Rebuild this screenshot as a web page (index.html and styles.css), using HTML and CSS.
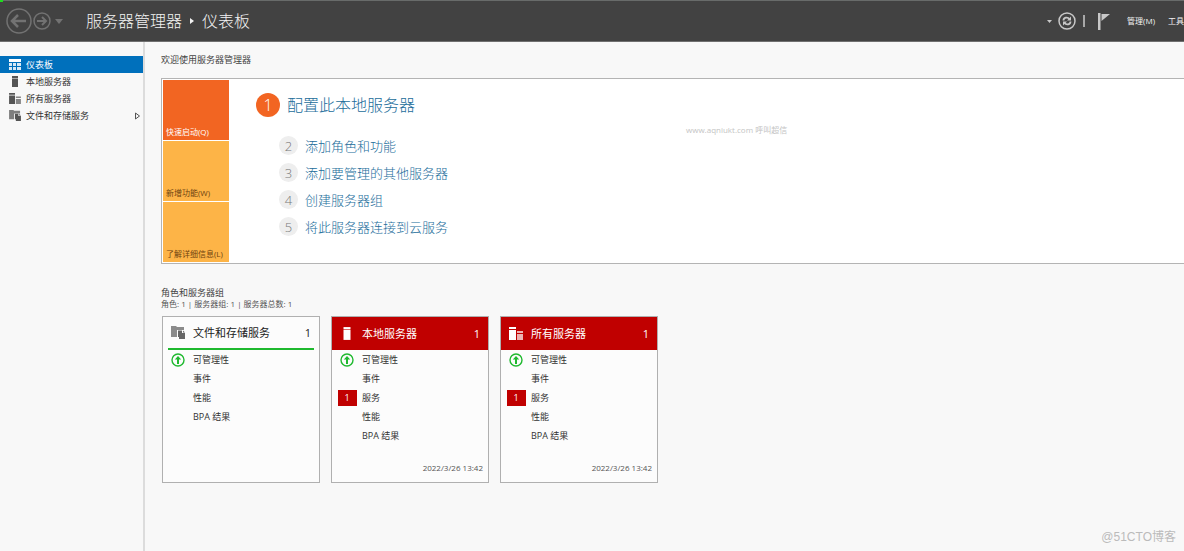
FILE: index.html
```html
<!DOCTYPE html>
<html lang="zh-CN">
<head>
<meta charset="utf-8">
<title>服务器管理器</title>
<link rel="stylesheet" href="styles.css">
</head>
<body>
<svg class="defs" aria-hidden="true">
  <symbol id="i-dash" viewBox="0 0 12 11"><path d="M0 0h12v3H0z"/><path opacity=".85" d="M0 4h3v3H0zM4 4h3v3H4zM8 4h4v3H8zM0 8h3v3H0zM4 8h3v3H4zM8 8h4v3H8z"/></symbol>
  <symbol id="i-server" viewBox="0 0 12 11"><path d="M3 0h6v2H3z"/><path d="M3 2.500h6V11H3z"/></symbol>
  <symbol id="i-servers" viewBox="0 0 14 13"><path d="M0 0h7v2H0zM0 3h7v10H0z"/><path opacity=".7" d="M8 4h6v2H8zM8 7h6v6H8z"/></symbol>
  <symbol id="i-files" viewBox="0 0 14 13"><path opacity=".75" d="M0 0h5l1 1h7v3H6v7H0zM0 2.500"/><path d="M7 4.500h4V7h3v6H8v-2H7zM12 4.500l2 2h-2z"/></symbol>
  <symbol id="i-up" viewBox="0 0 14 14"><circle cx="7" cy="7" r="6" fill="none" stroke="#1fb92f" stroke-width="1.4"/><path fill="#1fb92f" d="M7 3l3.200 3.400H8V11H6V6.400H3.800z"/></symbol>
</svg>

<header class="topbar">
  <nav class="history" aria-label="导航">
    <button class="icon-btn" aria-label="后退"><svg width="26" height="26" viewBox="0 0 26 26"><circle cx="13" cy="13" r="12"/><path d="M20 13H7M12 7l-6 6 6 6" stroke-width="2.500"/></svg></button>
    <button class="icon-btn" aria-label="前进"><svg width="18" height="18" viewBox="0 0 18 18"><circle cx="9" cy="9" r="8"/><path d="M4 9h9M9 5l4 4-4 4" stroke-width="2"/></svg></button>
    <button class="icon-btn" aria-label="历史记录"><svg width="8" height="5" viewBox="0 0 8 5"><path class="solid" d="M0 0h8L4 5z"/></svg></button>
  </nav>
  <h1 class="crumbs"><span>服务器管理器</span><svg width="4" height="6" viewBox="0 0 4 6"><path d="M0 0l4 3-4 3z"/></svg><span>仪表板</span></h1>
  <div class="tools">
    <button class="icon-btn" aria-label="选项"><svg width="5" height="3" viewBox="0 0 5 3"><path class="solid" d="M0 0h5L2.500 3z"/></svg></button>
    <button class="icon-btn" aria-label="刷新"><svg width="18" height="18" viewBox="0 0 18 18"><circle cx="9" cy="9" r="8"/><path d="M5.500 8.500c0-3 4-4 6-1.500M12.500 9.500c0 3-4 4-6 1.500" stroke-width="1.800"/><path class="solid" d="M13 4.500v4H9zM5 13.500v-4h4z"/></svg></button>
    <span class="divider"></span>
    <button class="icon-btn flag" aria-label="通知"><svg width="12" height="17" viewBox="0 0 12 17"><path class="solid" d="M0 0h2.500v17H0zM3.500 1H12L3.500 8z"/></svg></button>
    <button class="menu">管理(M)</button>
    <button class="menu">工具</button>
  </div>
</header>

<div class="body">
  <nav class="sidebar" aria-label="服务器">
    <a class="side-item active" href="#dashboard"><svg><use href="#i-dash"/></svg><span>仪表板</span></a>
    <a class="side-item" href="#local"><svg><use href="#i-server"/></svg><span>本地服务器</span></a>
    <a class="side-item" href="#all"><svg><use href="#i-servers"/></svg><span>所有服务器</span></a>
    <a class="side-item" href="#files"><svg><use href="#i-files"/></svg><span>文件和存储服务</span><svg class="expand" viewBox="0 0 5 8"><path d="M.5 1v6L4.500 4z"/></svg></a>
  </nav>

  <main class="content">
    <h2 class="section-title">欢迎使用服务器管理器</h2>
    <section class="welcome">
      <div class="tabs">
        <button class="tab selected">快速启动(Q)</button>
        <button class="tab">新增功能(W)</button>
        <button class="tab">了解详细信息(L)</button>
      </div>
      <div class="steps">
        <a class="step primary" href="#s1"><span class="num">1</span><span>配置此本地服务器</span></a>
        <a class="step" href="#s2"><span class="num">2</span><span>添加角色和功能</span></a>
        <a class="step" href="#s3"><span class="num">3</span><span>添加要管理的其他服务器</span></a>
        <a class="step" href="#s4"><span class="num">4</span><span>创建服务器组</span></a>
        <a class="step" href="#s5"><span class="num">5</span><span>将此服务器连接到云服务</span></a>
      </div>
      <p class="site-mark">www.aqniukt.com 呼叫超信</p>
    </section>

    <h2 class="section-title groups-title">角色和服务器组</h2>
    <p class="stats">角色: 1 | 服务器组: 1 | 服务器总数: 1</p>

    <div class="cards">
      <article class="card ok">
        <h3 class="card-head"><svg><use href="#i-files"/></svg><span>文件和存储服务</span><span class="count">1</span></h3>
        <ul class="rows">
          <li><span class="mark"><svg><use href="#i-up"/></svg></span><a href="#m">可管理性</a></li>
          <li><span class="mark"></span><a href="#e">事件</a></li>
          <li><span class="mark"></span><a href="#p">性能</a></li>
          <li><span class="mark"></span><a href="#b">BPA 结果</a></li>
        </ul>
      </article>
      <article class="card alert">
        <h3 class="card-head"><svg><use href="#i-server"/></svg><span>本地服务器</span><span class="count">1</span></h3>
        <ul class="rows">
          <li><span class="mark"><svg><use href="#i-up"/></svg></span><a href="#m">可管理性</a></li>
          <li><span class="mark"></span><a href="#e">事件</a></li>
          <li><span class="mark"><b class="badge">1</b></span><a href="#s">服务</a></li>
          <li><span class="mark"></span><a href="#p">性能</a></li>
          <li><span class="mark"></span><a href="#b">BPA 结果</a></li>
        </ul>
        <time class="stamp">2022/3/26 13:42</time>
      </article>
      <article class="card alert">
        <h3 class="card-head"><svg><use href="#i-servers"/></svg><span>所有服务器</span><span class="count">1</span></h3>
        <ul class="rows">
          <li><span class="mark"><svg><use href="#i-up"/></svg></span><a href="#m">可管理性</a></li>
          <li><span class="mark"></span><a href="#e">事件</a></li>
          <li><span class="mark"><b class="badge">1</b></span><a href="#s">服务</a></li>
          <li><span class="mark"></span><a href="#p">性能</a></li>
          <li><span class="mark"></span><a href="#b">BPA 结果</a></li>
        </ul>
        <time class="stamp">2022/3/26 13:42</time>
      </article>
    </div>
  </main>
</div>
<p class="credit">@51CTO博客</p>
</body>
</html>
```
FILE: styles.css
```css
* { box-sizing: border-box; margin: 0; padding: 0; }

body {
  display: flex;
  flex-direction: column;
  min-height: 100vh;
  background: #f8f8f8;
  color: #333;
  font: 9px/12px "Open Sans", "Noto Sans CJK SC", sans-serif;
}

a { color: inherit; text-decoration: none; }
button { border: 0; background: none; color: inherit; font: inherit; white-space: nowrap; }
.defs { position: absolute; width: 0; height: 0; }

/* Top bar */
.topbar {
  position: relative;
  display: flex;
  align-items: center;
  height: 42px;
  padding-left: 6px;
  border-top: 1px solid #686b6a;
  border-bottom: 1px solid #707070;
  background: #424242;
  color: #f2f2f2;
}
.topbar::before { content: ""; position: absolute; left: 0; top: -1px; width: 3px; height: 2px; background: #1fdc1f; }
.icon-btn { display: flex; }
.icon-btn svg { fill: none; stroke: currentColor; stroke-width: 1.5; }
.icon-btn .solid { fill: currentColor; stroke: none; }
.history { display: flex; align-items: center; gap: 1px; width: 80px; color: #727272; }
.history .icon-btn:last-child { margin-left: 3px; }
.crumbs { display: flex; align-items: center; gap: 8px; font-size: 16px; line-height: 24px; font-weight: 300; }
.crumbs svg { fill: currentColor; }
.tools { display: flex; align-items: center; margin-left: auto; color: #c8c8c8; }
.tools .icon-btn { margin-right: 6px; }
.divider { width: 2px; height: 12px; margin: 0 13px 0 1px; background: #a8a8a8; }
.tools .flag { margin-right: 17px; }
.menu { font-size: 8px; color: #f2f2f2; }
.menu + .menu { margin-left: 13px; }

/* Layout */
.body { display: flex; flex: 1; }
.sidebar { flex: none; width: 145px; padding-top: 14px; border-right: 2px solid #dcdcdc; }
.content { flex: 1; min-width: 0; padding: 12px 0 16px 16px; }

.side-item { display: flex; align-items: center; gap: 5px; height: 17px; padding: 0 3px 0 9px; }
.side-item svg { width: 12px; height: 11px; fill: #555; }
.side-item.active { background: #0070bc; color: #fff; }
.side-item.active svg { fill: #fff; }
.side-item .expand { width: 5px; height: 8px; margin-left: auto; fill: none; stroke: #555; stroke-width: 1; }

/* Welcome panel */
.section-title { font-size: 9px; line-height: 12px; font-weight: 400; color: #444; }
.welcome {
  position: relative;
  display: flex;
  margin-top: 12px;
  border: 1px solid #b4b4b4;
  border-right: 0;
  background: #fff;
}
.tabs { display: grid; grid-template-rows: repeat(3, 60px); gap: 1px; padding: 1px 0 1px 1px; width: 67px; }
.tab { display: flex; align-items: flex-end; padding: 0 0 2px 3px; background: #fdb447; color: #6e4310; font-size: 8px; line-height: 12px; }
.tab.selected { background: #f26522; color: #fff; }
.steps { display: flex; flex-direction: column; align-items: flex-start; padding: 12px 0 0 27px; }
.step { display: flex; align-items: center; gap: 7px; height: 27px; padding-left: 23px; font-size: 13px; color: #226d9a; font-weight: 300; }
.step.primary { margin-bottom: 14px; padding-left: 0; font-size: 16px; }
.num { display: grid; place-items: center; width: 19px; height: 19px; border-radius: 50%; background: #eee; color: #777; font-size: 13px; }
.primary .num { width: 24px; height: 24px; background: #f26522; color: #fff; font-size: 16px; }
.site-mark { position: absolute; left: 524px; top: 45px; color: #c4c4c4; font-size: 8px; }

/* Role cards */
.groups-title { margin-top: 23px; }
.stats { font-size: 8px; line-height: 10px; color: #555; }
.cards { display: flex; flex-wrap: wrap; gap: 11px; margin-top: 7px; padding-left: 1px; }
.card { display: flex; flex-direction: column; width: 158px; min-height: 167px; border: 1px solid #b0b0b0; background: #fcfcfc; }
.card-head { display: flex; align-items: center; height: 33px; padding: 0 8px; font-size: 11px; line-height: 16px; font-weight: 400; color: #222; }
.card-head svg { width: 14px; height: 13px; margin-right: 8px; fill: #666; }
.count { margin-left: auto; }
.ok .card-head { margin: 0 5px; padding: 0 3px; border-bottom: 2px solid #1fb92f; }
.alert .card-head { background: #c00000; color: #fff; }
.alert .card-head svg { fill: #fff; }
.rows { list-style: none; }
.rows li { display: flex; align-items: center; height: 19px; }
.mark { display: grid; place-items: center; width: 30px; }
.mark svg { width: 14px; height: 14px; }
.badge { width: 19px; height: 16px; background: #c00000; color: #fff; font-weight: 400; line-height: 16px; text-align: center; }
.stamp { margin: auto 5px 8px auto; font-size: 8px; color: #555; }

.credit { position: absolute; right: 8px; bottom: 6px; color: #bbb; font: 12px/16px "Liberation Sans", "Noto Sans CJK SC", sans-serif; }
```
